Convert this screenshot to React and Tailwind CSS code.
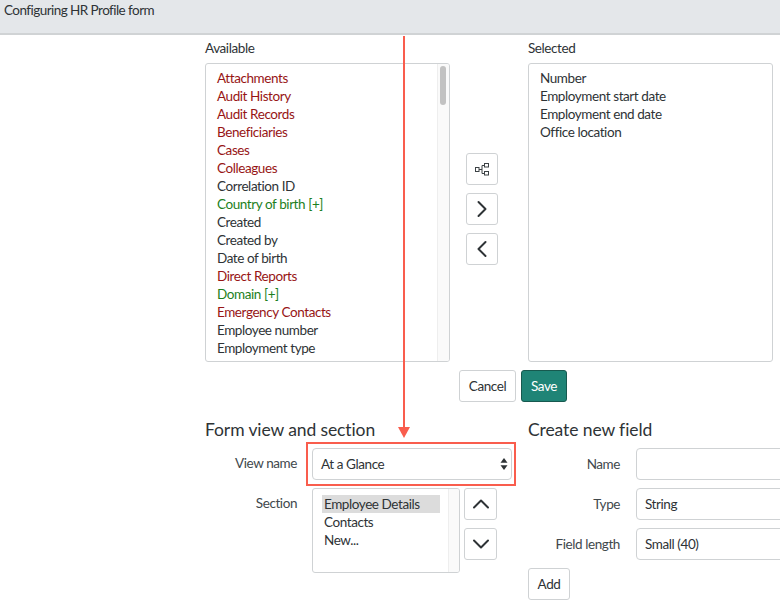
import React from 'react';
import { ChevronRight, ChevronLeft, ChevronUp, ChevronDown } from 'lucide-react';

const RED = 'text-[#971515]';
const GREEN = 'text-[#1d7f1d]';
const DARK = 'text-[#2e3336]';

const available = [
  ['Attachments', RED],
  ['Audit History', RED],
  ['Audit Records', RED],
  ['Beneficiaries', RED],
  ['Cases', RED],
  ['Colleagues', RED],
  ['Correlation ID', DARK],
  ['Country of birth [+]', GREEN],
  ['Created', DARK],
  ['Created by', DARK],
  ['Date of birth', DARK],
  ['Direct Reports', RED],
  ['Domain [+]', GREEN],
  ['Emergency Contacts', RED],
  ['Employee number', DARK],
  ['Employment type', DARK],
  ['Ethnicity', DARK],
];

const selected = ['Number', 'Employment start date', 'Employment end date', 'Office location'];

const IconButton = ({ children, wide }) => (
  <button className={`flex h-[32px] items-center justify-center rounded-[3px] border border-[#cfd2d4] bg-white text-[#2e3336] ${wide ? 'w-[33px]' : 'w-[32px]'}`}>
    {children}
  </button>
);

const TreeIcon = () => (
  <svg width="14" height="13" viewBox="0 0 14 13" fill="none" stroke="#3c4245" strokeWidth="1">
    <rect x="0.5" y="4.5" width="3.5" height="4" />
    <rect x="9.5" y="0.5" width="4" height="3.5" />
    <rect x="9.5" y="8.5" width="4" height="3.5" />
    <path d="M4 6.5H7M7 2.5V10.5M7 2.5H9.5M7 10.5H9.5" />
  </svg>
);

const Field = ({ label, children }) => (
  <div className="flex h-[32px] items-center">
    <label className="w-[92px] shrink-0 text-right text-[#41484c]">{label}</label>
    <div className="ml-[16px] shrink-0">{children}</div>
  </div>
);

const TextBox = ({ children }) => (
  <div className="flex h-[32px] w-[200px] items-center rounded-[4px] border border-[#cfd2d4] bg-white pb-[1px] pl-[8px] text-[#2e3336]">
    {children}
  </div>
);

export default function App() {
  return (
    <div className="relative h-[600px] w-[780px] overflow-hidden bg-white font-['Lato',sans-serif] text-[13.5px] leading-[18px] tracking-[-0.42px] text-[#2e3336]">
      <div className="h-[35px] border-b-2 border-[#d0d3d5] bg-[#e4e7ea] pl-[4px] pt-[1px] tracking-[-0.55px] text-[#2e3336]">
        Configuring HR Profile form
      </div>

      <div className="pl-[205px]">
        <div className="flex pt-[4px]">
          <div className="w-[245px] shrink-0">
            <div className="mb-[6px] h-[18px]">Available</div>
            <div className="flex h-[299px] overflow-hidden rounded-[3px] border border-[#cfd2d4]">
              <ul className="flex-1 pl-[11px] pt-[5px]">
                {available.map(([name, color]) => (
                  <li key={name} className={`h-[18px] ${color}`}>{name}</li>
                ))}
              </ul>
              <div className="w-[12px] border-l border-[#eeeeee] bg-[#fafafa] pl-[2px] pt-[2px]">
                <div className="h-[39px] w-[6px] rounded-full bg-[#c2c2c2]" />
              </div>
            </div>
          </div>

          <div className="ml-[16px] flex w-[32px] shrink-0 flex-col gap-[8px] pt-[114px]">
            <IconButton><TreeIcon /></IconButton>
            <IconButton><ChevronRight size={28} strokeWidth={1.7} /></IconButton>
            <IconButton><ChevronLeft size={28} strokeWidth={1.7} /></IconButton>
          </div>

          <div className="ml-[30px] w-[245px] shrink-0">
            <div className="mb-[6px] h-[18px]">Selected</div>
            <ul className="h-[299px] rounded-[3px] border border-[#cfd2d4] pl-[11px] pt-[5px]">
              {selected.map((name) => (
                <li key={name} className="h-[18px]">{name}</li>
              ))}
            </ul>
          </div>
        </div>

        <div className="mt-[8px] flex gap-[5px] pl-[254px]">
          <button className="h-[32px] w-[57px] rounded-[3px] border border-[#cfd2d4] bg-white">Cancel</button>
          <button className="h-[32px] w-[46px] rounded-[3px] border border-[#17594f] bg-[#1f8476] text-white">Save</button>
        </div>

        <div className="mt-[15px] flex">
          <div className="w-[323px] shrink-0">
            <h2 className="mb-[5px] h-[26px] text-[17.5px] leading-[26px] tracking-[-0.1px] text-[#2e3336]">Form view and section</h2>
            <div className="flex flex-col gap-[8px]">
              <div className="flex h-[32px] items-center">
                <label className="w-[92px] shrink-0 -translate-y-px text-right text-[#41484c]">View name</label>
                <div className="ml-[15px] flex h-[32px] w-[200px] items-center justify-between rounded-[4px] border border-[#cfd2d4] bg-white pb-[1px] pl-[8px] pr-[3px]">
                  At a Glance
                  <svg width="8" height="12" viewBox="0 0 8 12" fill="#2e3336">
                    <path d="M4 0L7.5 4.8H0.5Z" />
                    <path d="M4 12L0.5 7.2H7.5Z" />
                  </svg>
                </div>
              </div>
              <div className="flex items-start">
                <label className="w-[92px] shrink-0 pt-[6px] text-right text-[#41484c]">Section</label>
                <div className="ml-[15px] flex h-[85px] w-[148px] shrink-0 overflow-hidden rounded-[3px] border border-[#cfd2d4]">
                  <ul className="flex-1 pl-[9px] pr-[8px] pt-[6px]">
                    <li className="h-[18px] bg-[#dcdcdc] pl-[2px]">Employee Details</li>
                    <li className="h-[18px] pl-[2px]">Contacts</li>
                    <li className="h-[18px] pl-[2px]">New...</li>
                  </ul>
                  <div className="w-[11px] border-l border-[#eeeeee] bg-[#fafafa]" />
                </div>
                <div className="ml-[4px] flex flex-col gap-[8px]">
                  <IconButton wide><ChevronUp size={28} strokeWidth={1.7} /></IconButton>
                  <IconButton wide><ChevronDown size={28} strokeWidth={1.7} /></IconButton>
                </div>
              </div>
            </div>
          </div>

          <div className="shrink-0">
            <h2 className="mb-[5px] h-[26px] text-[17.5px] leading-[26px] tracking-[-0.1px] text-[#2e3336]">Create new field</h2>
            <div className="flex flex-col gap-[8px]">
              <Field label="Name"><TextBox /></Field>
              <Field label="Type"><TextBox>String</TextBox></Field>
              <Field label="Field length"><TextBox>Small (40)</TextBox></Field>
              <button className="h-[32px] w-[42px] rounded-[3px] border border-[#cfd2d4] bg-white">Add</button>
            </div>
          </div>
        </div>
      </div>

      {/* annotation on top of the screenshot */}
      <div className="pointer-events-none absolute left-[306px] top-[442px] h-[44px] w-[210px] border-2 border-[#f95d4d]" />
      <svg className="pointer-events-none absolute left-[397px] top-[36px]" width="14" height="402" viewBox="0 0 14 402">
        <path d="M7 0V392" stroke="#f95d4d" strokeWidth="2" />
        <path d="M1 391H13L7 402Z" fill="#f95d4d" />
      </svg>
    </div>
  );
}
